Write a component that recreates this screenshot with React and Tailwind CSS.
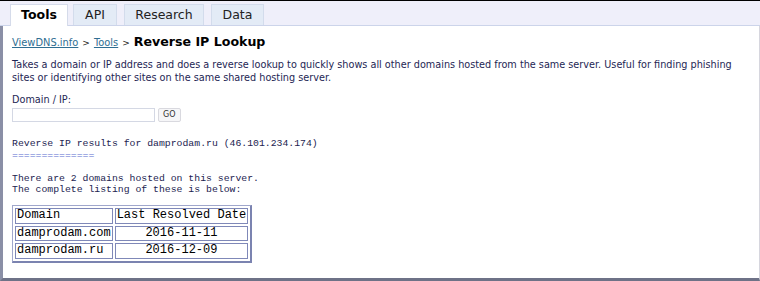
import React from 'react';

const tabs = [
  { name: 'Tools', w: 'w-[58px]', active: true },
  { name: 'API', w: 'w-[44px]' },
  { name: 'Research', w: 'w-[80px]' },
  { name: 'Data', w: 'w-[53px]' },
];

const rows = [
  { domain: 'damprodam.com', date: '2016-11-11' },
  { domain: 'damprodam.ru', date: '2016-12-09' },
];

const App = () => {
  return (
    <div className="w-[760px] h-[281px] bg-white overflow-hidden flex flex-col font-['DejaVu_Sans',sans-serif]">
      {/* Tab strip */}
      <div className="h-[26px] bg-[#efeffa] border-t border-black border-b border-b-[#ccd4ea] flex items-end pl-[10px] shrink-0">
        {tabs.map((t, i) => (
          <div
            key={t.name}
            className={
              'h-[21px] flex items-center justify-center text-[12.5px] border border-b-0 ' +
              t.w + ' ' +
              (i === 1 ? 'ml-[5px] ' : i > 1 ? 'ml-[7px] ' : '') +
              (t.active
                ? 'bg-white border-[#d5dbea] font-bold text-black -mb-px h-[22px]'
                : 'bg-[#e3ebf6] border-[#d3dcec] text-[#222]')
            }
          >
            {t.name}
          </div>
        ))}
      </div>

      {/* Content panel */}
      <div className="flex-1 border-l-[3px] border-l-[#8a8fa6] border-r border-r-[#d6d6de] border-b-[3px] border-b-[#6e7287] pl-[9px] pt-[7px]">
        <div className="flex items-baseline text-[9.9px] text-[#222] leading-[17px]">
          <a className="text-[#2f6e92] underline">ViewDNS.info</a>
          <span className="mx-[4px] text-[9px]">&gt;</span>
          <a className="text-[#2f6e92] underline">Tools</a>
          <span className="mx-[4px] text-[9px]">&gt;</span>
          <span className="text-[12.6px] font-bold text-black">Reverse IP Lookup</span>
        </div>

        <p className="mt-[6px] text-[9.7px] leading-[13px] text-[#1e2654] whitespace-nowrap">
          Takes a domain or IP address and does a reverse lookup to quickly shows all other domains hosted from the same server. Useful for finding phishing
          <br />
          sites or identifying other sites on the same shared hosting server.
        </p>

        <div className="mt-[10px] text-[9.7px] text-[#1e2654] leading-[12px]">Domain / IP:</div>
        <div className="flex items-center mt-[2px]">
          <input className="w-[143px] h-[14px] border border-[#d4d8e4] bg-white" />
          <button className="ml-[3px] h-[14px] px-[4px] text-[8px] bg-[#f6f6f8] border border-[#d9d9df] rounded-[2px] text-[#333]">
            GO
          </button>
        </div>

        <div className="mt-[16px] font-['Liberation_Mono',monospace] text-[9.8px] leading-[11.6px] text-[#1c2350] whitespace-pre">
          <div>Reverse IP results for damprodam.ru (46.101.234.174)</div>
          <div className="text-[#5a6bd0]">==============</div>
          <div>&nbsp;</div>
          <div>There are 2 domains hosted on this server.</div>
          <div>The complete listing of these is below:</div>
        </div>

        <table className="mt-[9px] border-separate border-spacing-[2px] border border-[#a0a7cc] border-r-2 border-b-2 border-r-[#7b83b0] border-b-[#7b83b0] font-['Liberation_Mono',monospace] text-[12px] leading-[13.6px] text-black">
          <tbody>
            <tr>
              <td className="border border-[#7f88b8] px-[1px] w-[96px]">Domain</td>
              <td className="border border-[#7f88b8] px-[1px]">Last Resolved Date</td>
            </tr>
            {rows.map((r) => (
              <tr key={r.domain}>
                <td className="border border-[#7f88b8] px-[1px]">{r.domain}</td>
                <td className="border border-[#7f88b8] px-[1px] text-center">{r.date}</td>
              </tr>
            ))}
          </tbody>
        </table>
      </div>
    </div>
  );
};

export default App;
